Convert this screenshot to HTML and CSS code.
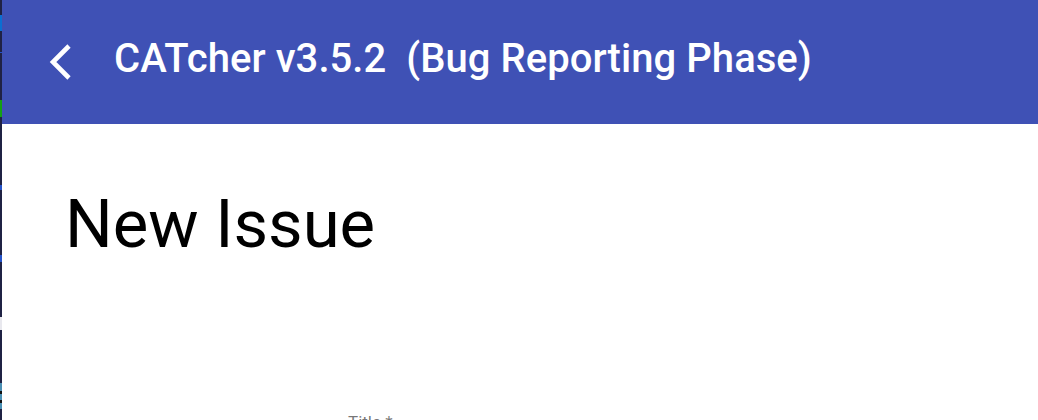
FILE: index.html
```html
<!DOCTYPE html>
<html lang="en">
<head>
<meta charset="utf-8">
<title>CATcher</title>
<link rel="stylesheet" href="styles.css">
</head>
<body>
<div class="frame">
  <div class="edge">
    <span class="e-dark h15"></span>
    <span class="e-blue h16"></span>
    <span class="e-dark h21"></span>
    <span class="e-line h1"></span>
    <span class="e-dark h47"></span>
    <span class="e-green h17"></span>
    <span class="e-dark h68"></span>
    <span class="e-line h5"></span>
    <span class="e-dark h65"></span>
    <span class="e-line h7"></span>
    <span class="e-dark h55"></span>
    <span class="e-white h13"></span>
    <span class="e-dark h53"></span>
    <span class="e-teal h8"></span>
    <span class="e-black h3"></span>
    <span class="e-teal h6"></span>
    <span class="e-black h3"></span>
    <span class="e-teal h6"></span>
  </div>
  <div class="app">
    <header class="toolbar">
      <button class="back" aria-label="Back">
        <svg width="30" height="40" viewBox="0 0 30 40" aria-hidden="true">
          <polyline points="21,4 5,20 21,36" fill="none" stroke="#ffffff" stroke-width="4.6" stroke-linecap="butt" stroke-linejoin="miter"/>
        </svg>
      </button>
      <span class="app-title">CATcher v3.5.2&nbsp; (Bug Reporting Phase)</span>
    </header>
    <main class="content">
      <h1 class="page-title">New Issue</h1>
      <form class="issue-form">
        <label class="field-label">Title *</label>
      </form>
    </main>
  </div>
</div>
</body>
</html>
```
FILE: styles.css
```css
html, body {
  margin: 0;
  padding: 0;
  height: 100%;
  overflow: hidden;
  background: #ffffff;
  font-family: Roboto, "Helvetica Neue", Arial, sans-serif;
}

.frame {
  display: flex;
  height: 420px;
  overflow: hidden;
}

.edge {
  width: 2px;
  flex: 0 0 2px;
  display: flex;
  flex-direction: column;
  background: #1f2244;
}

.edge span { display: block; width: 2px; }
.e-dark { background: #1f2244; }
.e-blue { background: #0b6fd2; }
.e-line { background: #2453c9; }
.e-green { background: #14a014; }
.e-white { background: #e8e8ee; }
.e-teal { background: #4a8fb4; }
.e-black { background: #111111; }
.h1 { height: 1px; }
.h3 { height: 3px; }
.h5 { height: 5px; }
.h6 { height: 6px; }
.h7 { height: 7px; }
.h8 { height: 8px; }
.h13 { height: 13px; }
.h15 { height: 15px; }
.h16 { height: 16px; }
.h17 { height: 17px; }
.h21 { height: 21px; }
.h47 { height: 47px; }
.h53 { height: 53px; }
.h55 { height: 55px; }
.h65 { height: 65px; }
.h68 { height: 68px; }

.app {
  flex: 1;
  display: flex;
  flex-direction: column;
  min-width: 0;
}

.toolbar {
  height: 124px;
  flex: 0 0 124px;
  background: #3f51b5;
  color: #ffffff;
  display: flex;
  align-items: center;
  padding-left: 46px;
  box-sizing: border-box;
}

.back {
  background: none;
  border: 0;
  padding: 0;
  margin: 0;
  width: 30px;
  height: 40px;
  display: flex;
  cursor: pointer;
}

.app-title {
  margin-left: 36px;
  margin-bottom: 7px;
  font-size: 40px;
  line-height: 47px;
  font-weight: 500;
  white-space: nowrap;
  letter-spacing: 0.05px;
}

.content {
  padding: 61px 0 0 63px;
}

.page-title {
  margin: 0;
  font-size: 67px;
  line-height: 78px;
  font-weight: 400;
  color: #000000;
}

.issue-form {
  padding: 149px 0 0 283px;
}

.field-label {
  font-size: 17px;
  line-height: 20px;
  color: rgba(0, 0, 0, 0.54);
}
```
